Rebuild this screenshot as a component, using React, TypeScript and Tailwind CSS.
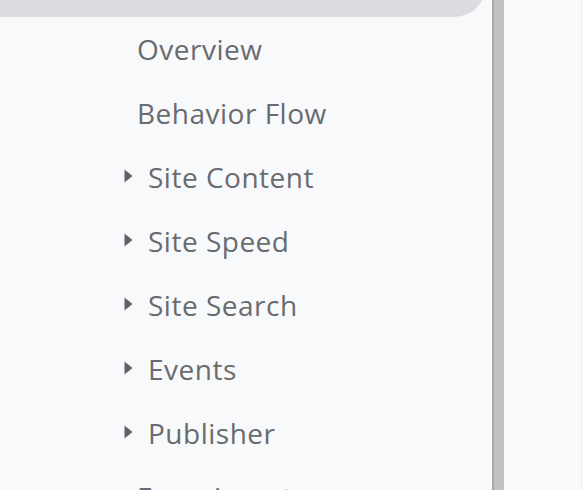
import React from 'react'

type NavItem = {
  label: string
  expandable?: boolean
}

const items: NavItem[] = [
  { label: 'Overview' },
  { label: 'Behavior Flow' },
  { label: 'Site Content', expandable: true },
  { label: 'Site Speed', expandable: true },
  { label: 'Site Search', expandable: true },
  { label: 'Events', expandable: true },
  { label: 'Publisher', expandable: true },
  { label: 'Experiments' },
]

const Caret = () => (
  <svg width="9" height="14" viewBox="0 0 9 14" className="-mt-[2px] shrink-0 fill-[#5f6368]">
    <path d="M0.5 0.5 L8.5 7 L0.5 13.5 Z" />
  </svg>
)

const NavRow = ({ item }: { item: NavItem }) => (
  <div className="flex h-16 shrink-0 items-center">
    {item.expandable ? (
      <div className="flex items-center pl-[124px]">
        <Caret />
        <span className="pl-[15px]">{item.label}</span>
      </div>
    ) : (
      <span className="pl-[137px]">{item.label}</span>
    )}
  </div>
)

export default function App() {
  return (
    <div className="flex h-[490px] w-[582px] overflow-hidden bg-[#f8f9fa]">
      <div
        className="flex w-[492px] shrink-0 flex-col text-[28px] font-medium tracking-[0.5px] text-[#686b6f]"
        style={{ fontFamily: '"Open Sans", Roboto, sans-serif' }}
      >
        <div className="-mt-[47px] h-16 w-[486px] shrink-0 rounded-r-[40px] bg-[#dadce0]" />
        {items.map((item) => (
          <NavRow key={item.label} item={item} />
        ))}
      </div>
      <div className="flex w-3 shrink-0">
        <div className="w-[2px] bg-[#a8a8a8]" />
        <div className="w-[10px] bg-[#c2c2c2]" />
      </div>
      <div className="flex-1 border-r border-[#e8eaed]" />
    </div>
  )
}
